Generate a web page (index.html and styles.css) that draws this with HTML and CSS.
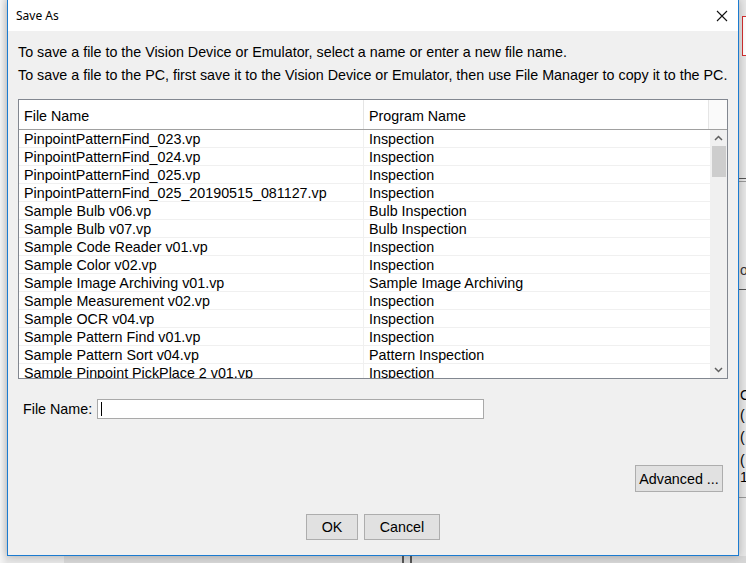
FILE: index.html
```html
<!DOCTYPE html>
<html>
<head>
<meta charset="utf-8">
<title>Save As</title>
<link rel="stylesheet" href="styles.css">
</head>
<body>
<div class="desktop">
  <div class="bg-app">
    <div class="bg-redbox"></div>
    <div class="bg-line l1"></div>
    <div class="bg-line l2"></div>
    <div class="bg-line l3"></div>
    <div class="bg-line l4"></div>
    <div class="bg-text t1">or</div>
    <div class="bg-text t2">C</div>
    <div class="bg-text t3">(</div>
    <div class="bg-text t4">(</div>
    <div class="bg-text t5">(</div>
    <div class="bg-text t6">1</div>
    <div class="bg-bottom"></div>
    <div class="bg-bar b1"></div>
    <div class="bg-bar b2"></div>
  </div>

  <div class="dialog">
    <div class="titlebar">
      <span class="title">Save As</span>
      <span class="close">
        <svg width="12" height="12" viewBox="0 0 12 12"><path d="M1 1 L11 11 M11 1 L1 11" stroke="#111" stroke-width="1.1" fill="none"/></svg>
      </span>
    </div>
    <div class="content">
      <p class="intro">To save a file to the Vision Device or Emulator, select a name or enter a new file name.</p>
      <p class="intro">To save a file to the PC, first save it to the Vision Device or Emulator, then use File Manager to copy it to the PC.</p>

      <div class="table">
        <div class="thead">
          <div class="th c1">File Name</div>
          <div class="th c2">Program Name</div>
          <div class="corner"></div>
        </div>
        <div class="tbody">
          <div class="rows">
            <div class="row"><div class="td c1">PinpointPatternFind_023.vp</div><div class="td c2">Inspection</div></div>
            <div class="row"><div class="td c1">PinpointPatternFind_024.vp</div><div class="td c2">Inspection</div></div>
            <div class="row"><div class="td c1">PinpointPatternFind_025.vp</div><div class="td c2">Inspection</div></div>
            <div class="row"><div class="td c1">PinpointPatternFind_025_20190515_081127.vp</div><div class="td c2">Inspection</div></div>
            <div class="row"><div class="td c1">Sample Bulb v06.vp</div><div class="td c2">Bulb Inspection</div></div>
            <div class="row"><div class="td c1">Sample Bulb v07.vp</div><div class="td c2">Bulb Inspection</div></div>
            <div class="row"><div class="td c1">Sample Code Reader v01.vp</div><div class="td c2">Inspection</div></div>
            <div class="row"><div class="td c1">Sample Color v02.vp</div><div class="td c2">Inspection</div></div>
            <div class="row"><div class="td c1">Sample Image Archiving v01.vp</div><div class="td c2">Sample Image Archiving</div></div>
            <div class="row"><div class="td c1">Sample Measurement v02.vp</div><div class="td c2">Inspection</div></div>
            <div class="row"><div class="td c1">Sample OCR v04.vp</div><div class="td c2">Inspection</div></div>
            <div class="row"><div class="td c1">Sample Pattern Find v01.vp</div><div class="td c2">Inspection</div></div>
            <div class="row"><div class="td c1">Sample Pattern Sort v04.vp</div><div class="td c2">Pattern Inspection</div></div>
            <div class="row"><div class="td c1">Sample Pinpoint PickPlace 2 v01.vp</div><div class="td c2">Inspection</div></div>
          </div>
          <div class="vscroll">
            <div class="arrow">
              <svg width="9" height="6" viewBox="0 0 9 6"><path d="M1 5 L4.5 1.5 L8 5" stroke="#606060" stroke-width="1.5" fill="none"/></svg>
            </div>
            <div class="thumb"></div>
            <div class="track"></div>
            <div class="arrow">
              <svg width="9" height="6" viewBox="0 0 9 6"><path d="M1 1 L4.5 4.5 L8 1" stroke="#606060" stroke-width="1.5" fill="none"/></svg>
            </div>
          </div>
        </div>
      </div>

      <div class="fname-row">
        <span class="label">File Name:</span>
        <div class="input"><span class="caret"></span></div>
      </div>

      <div class="adv-row">
        <button class="btn adv">Advanced ...</button>
      </div>

      <div class="btn-row">
        <button class="btn ok">OK</button>
        <button class="btn cancel">Cancel</button>
      </div>
    </div>
  </div>
</div>
</body>
</html>
```

FILE: styles.css
```css
* { box-sizing: border-box; }
html, body {
  margin: 0;
  padding: 0;
  width: 746px;
  height: 563px;
  overflow: hidden;
}
body {
  background: #ececec;
  font-family: "Liberation Sans", Arial, sans-serif;
  font-size: 14.3px;
  color: #000;
}
.desktop {
  position: relative;
  width: 746px;
  height: 563px;
  background: linear-gradient(to right, #f4f4f4 0, #e6e6e6 7px);
}

/* background application (behind dialog) */
.bg-app { position: absolute; inset: 0; }
.bg-redbox {
  position: absolute;
  left: 742px; top: 16px;
  width: 10px; height: 40px;
  border: 1px solid #d32f2f;
  background: #fff;
}
.bg-line { position: absolute; left: 739px; width: 10px; height: 1px; background: #555; }
.bg-line.l1 { top: 178px; }
.bg-line.l2 { top: 181px; background: #999; }
.bg-line.l3 { top: 289px; }
.bg-line.l4 { top: 497px; background: #999; }
.bg-text {
  position: absolute;
  left: 740px;
  font-size: 14px;
  line-height: 15px;
  color: #000;
}
.bg-text.t1 { top: 263px; color: #333; }
.bg-text.t2 { top: 388px; }
.bg-text.t3 { top: 408px; }
.bg-text.t4 { top: 430px; }
.bg-text.t5 { top: 453px; }
.bg-text.t6 { top: 470px; }
.bg-bottom {
  position: absolute;
  left: 64px; top: 556px;
  width: 690px; height: 8px;
  background: #d6d6d6;
}
.bg-bar { position: absolute; top: 556px; width: 2px; height: 8px; background: #555; }
.bg-bar.b1 { left: 402px; }
.bg-bar.b2 { left: 410px; }

/* dialog window */
.dialog {
  position: absolute;
  left: 7px;
  top: 0;
  width: 732px;
  height: 556px;
  border: 1px solid #1b7bd0;
  border-top: none;
  background: #f0f0f0;
  display: flex;
  flex-direction: column;
  box-shadow: 0 0 8px rgba(0,0,0,0.25);
}
.titlebar {
  height: 31px;
  flex: none;
  background: #fff;
  display: flex;
  align-items: center;
  justify-content: space-between;
  padding: 0 10px 0 8px;
}
.title {
  font-family: "Noto Sans", "Open Sans", sans-serif;
  font-size: 12px;
  color: #000;
  margin-top: -1px;
}
.close {
  display: flex;
  width: 12px;
  height: 12px;
}

.content {
  flex: 1;
  padding: 10px 10px 0 10px;
  display: flex;
  flex-direction: column;
}
.intro {
  margin: 0;
  line-height: 23px;
  white-space: nowrap;
}

/* table */
.table {
  margin-top: 12px;
  width: 710px;
  height: 280px;
  flex: none;
  border: 1px solid #828790;
  background: #fff;
  display: flex;
  flex-direction: column;
}
.thead {
  height: 30px;
  flex: none;
  display: flex;
  border-bottom: 1px solid #a0a0a0;
}
.th {
  line-height: 26px;
  padding-top: 3px;
  padding-left: 5px;
  white-space: nowrap;
}
.th.c1 { width: 345px; border-right: 1px solid #e5e5e5; }
.th.c2 { width: 345px; border-right: 1px solid #e5e5e5; padding-left: 5px; }
.corner { flex: 1; background: #fafafa; }

.tbody {
  flex: 1;
  display: flex;
  overflow: hidden;
}
.rows {
  width: 691px;
  overflow: hidden;
}
.row {
  display: flex;
  height: 18px;
  border-bottom: 1px solid #f0f0f0;
}
.td {
  line-height: 17px;
  padding-top: 1px;
  white-space: nowrap;
  overflow: hidden;
  padding-left: 5px;
}
.td.c1 { width: 345px; border-right: 1px solid #f0f0f0; }
.td.c2 { flex: 1; padding-left: 5px; }

.vscroll {
  width: 17px;
  background: #f0f0f0;
  display: flex;
  flex-direction: column;
  align-items: center;
}
.arrow {
  height: 16px;
  width: 17px;
  display: flex;
  align-items: center;
  justify-content: center;
}
.thumb {
  width: 14px;
  height: 31px;
  background: #cdcdcd;
}
.track { flex: 1; }

/* file name row */
.fname-row {
  display: flex;
  align-items: center;
  margin-top: 20px;
  padding-left: 5px;
  height: 20px;
}
.label { margin-right: 5px; white-space: nowrap; }
.input {
  width: 387px;
  height: 20px;
  border: 1px solid #a9a9a9;
  background: #fff;
  display: flex;
  align-items: center;
  padding-left: 3px;
}
.caret {
  width: 1px;
  height: 14px;
  background: #000;
}

.adv-row {
  display: flex;
  justify-content: flex-end;
  margin-top: 46px;
  padding-right: 5px;
}
.btn {
  font-family: "Liberation Sans", Arial, sans-serif;
  font-size: 14.3px;
  color: #000;
  background: #e1e1e1;
  border: 1px solid #adadad;
  padding: 0;
  margin: 0;
}
.btn.adv { width: 88px; height: 27px; }
.btn-row {
  display: flex;
  justify-content: center;
  gap: 6px;
  margin-top: 22px;
}
.btn.ok { width: 52px; height: 26px; }
.btn.cancel { width: 76px; height: 26px; }
```
